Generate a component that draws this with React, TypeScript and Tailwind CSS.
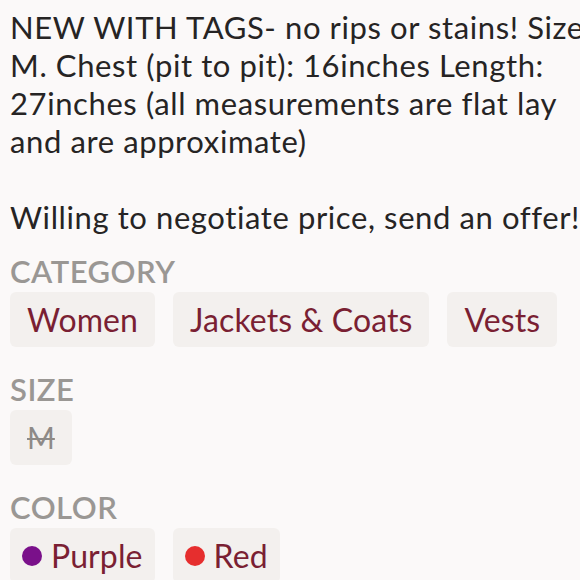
import React from "react";

type Chip = {
  label: string;
  dot?: string;
  muted?: boolean;
};

const lines = [
  "NEW WITH TAGS- no rips or stains! Size",
  "M. Chest (pit to pit): 16inches Length:",
  "27inches (all measurements are flat lay",
  "and are approximate)",
  "",
  "Willing to negotiate price, send an offer!",
];

const sections: { title: string; chips: Chip[] }[] = [
  {
    title: "CATEGORY",
    chips: [{ label: "Women" }, { label: "Jackets & Coats" }, { label: "Vests" }],
  },
  { title: "SIZE", chips: [{ label: "M", muted: true }] },
  {
    title: "COLOR",
    chips: [
      { label: "Purple", dot: "bg-[#7a108a]" },
      { label: "Red", dot: "bg-[#e62e2e]" },
    ],
  },
];

const Tag = ({ chip }: { chip: Chip }) => (
  <div
    className={`flex h-[55px] items-center gap-[9px] rounded-[6px] bg-[#f3f0ee] ${
      chip.dot ? "px-[12px]" : "px-[17px]"
    }`}
  >
    {chip.dot && <span className={`h-[20px] w-[20px] rounded-full ${chip.dot}`} />}
    <span
      className={
        chip.muted
          ? "text-[30px] text-[#8e8a87] line-through decoration-[2px]"
          : "text-[32px] tracking-[0.1px] text-[#7a1f33]"
      }
    >
      {chip.label}
    </span>
  </div>
);

export default function App() {
  return (
    <div className="h-[580px] w-[580px] overflow-hidden bg-[#fbf9f9] pl-[10px] pt-[8px] font-['Lato',sans-serif]">
      {/* Description */}
      <div className="text-[31px] leading-[38px] tracking-[0.6px] text-[#262424]">
        {lines.map((l, i) => (
          <div key={i} className="h-[38px] whitespace-nowrap">
            {l}
          </div>
        ))}
      </div>

      {/* Details */}
      {sections.map((s, i) => (
        <div key={s.title} className={i === 0 ? "mt-[20px]" : "mt-[27px]"}>
          <div className="text-[31px] font-semibold leading-[30px] tracking-[0.5px] text-[#9a9794]">
            {s.title}
          </div>
          <div className="mt-[6px] flex gap-[18px]">
            {s.chips.map((c) => (
              <Tag key={c.label} chip={c} />
            ))}
          </div>
        </div>
      ))}
    </div>
  );
}
